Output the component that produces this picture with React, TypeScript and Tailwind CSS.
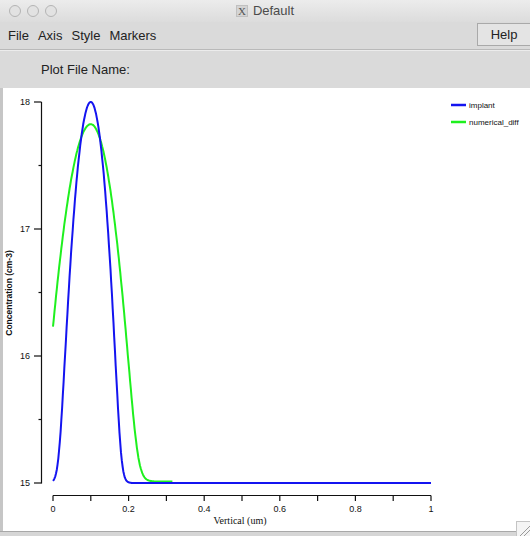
import React from 'react';

// page-space mapping for the plot
const px = (x: number) => 53 + 378 * x;
const py = (c: number) => 484 - 127 * (c - 15);

function profile(x: number, peak: number, kl: number, kr: number) {
  const dx = x - 0.1;
  const k = dx < 0 ? kl : kr;
  return Math.log10(Math.pow(10, peak - k * dx * dx) + 1e15);
}

function path(from: number, to: number, f: (x: number) => number, dy = 0) {
  const pts: string[] = [];
  for (let x = from; x <= to + 1e-9; x += 0.002) {
    pts.push(`${px(x).toFixed(1)},${(py(f(x)) + dy).toFixed(1)}`);
  }
  return 'M' + pts.join(' L');
}

const blue = path(0, 1, (x) => profile(x, 18, 440, 490));
const green = path(0, 0.317, (x) => profile(x, 17.813, 162, 194), -1.5);

function Plot() {
  const yTicks = [18, 17, 16, 15];
  const xTicks = Array.from({ length: 11 }, (_, i) => i / 10);
  return (
    <svg width="527" height="442" viewBox="3 89 527 442" className="block">
      {/* y axis */}
      <line x1="41.5" y1="103" x2="41.5" y2="484.5" stroke="#111" strokeWidth="1.2" />
      {yTicks.map((t) => (
        <g key={t}>
          <line x1="34" y1={py(t)} x2="41.5" y2={py(t)} stroke="#111" strokeWidth="1.2" />
          <text x="30" y={py(t) + 3} textAnchor="end" fontSize="9" fontFamily="Liberation Sans, Arial, sans-serif" fill="#111">
            {t}
          </text>
        </g>
      ))}
      {[17.5, 16.5, 15.5].map((t) => (
        <line key={t} x1="38.5" y1={py(t)} x2="41.5" y2={py(t)} stroke="#111" strokeWidth="1.2" />
      ))}
      <text
        transform="translate(12 294) rotate(-90)"
        textAnchor="middle"
        fontSize="8.5"
        fontWeight="bold"
        fontFamily="Liberation Sans, Arial, sans-serif"
        fill="#111"
      >
        Concentration (cm-3)
      </text>

      {/* x axis */}
      <line x1="53" y1="496.5" x2="431" y2="496.5" stroke="#111" strokeWidth="1.2" />
      {xTicks.map((t, i) => (
        <g key={i}>
          <line x1={px(t)} y1="496.5" x2={px(t)} y2="502" stroke="#111" strokeWidth="1.2" />
          {i % 2 === 0 && (
            <text x={px(t)} y="513" textAnchor="middle" fontSize="9" fontFamily="Liberation Sans, Arial, sans-serif" fill="#111">
              {i === 0 ? '0' : i === 10 ? '1' : t.toFixed(1)}
            </text>
          )}
        </g>
      ))}
      <text x="240" y="525" textAnchor="middle" fontSize="10" fontFamily="Liberation Serif, Times New Roman, serif" fill="#111">
        Vertical (um)
      </text>

      {/* curves */}
      <path d={green} fill="none" stroke="#1ef01e" strokeWidth="2" strokeLinejoin="round" />
      <path d={blue} fill="none" stroke="#1414f0" strokeWidth="2" strokeLinejoin="round" />

      {/* legend */}
      <line x1="451" y1="106" x2="466" y2="106" stroke="#1414f0" strokeWidth="2.5" />
      <text x="469" y="109" fontSize="8" fontFamily="Liberation Sans, Arial, sans-serif" fill="#111">
        implant
      </text>
      <line x1="451" y1="123" x2="466" y2="123" stroke="#1ef01e" strokeWidth="2.5" />
      <text x="469" y="126" fontSize="8" fontFamily="Liberation Sans, Arial, sans-serif" fill="#111">
        numerical_diff
      </text>
    </svg>
  );
}

function Light() {
  return <span className="w-[12px] h-[12px] rounded-full border border-[#b4b4b4] bg-[#e2e2e2]" />;
}

export default function App() {
  return (
    <div className="w-[530px] h-[536px] flex flex-col bg-[#dadada] overflow-hidden font-['Liberation_Sans',Arial,sans-serif] text-[13px] text-[#222]">
      {/* title bar */}
      <div className="h-[22px] shrink-0 grid grid-cols-[1fr_auto_1fr] items-center bg-gradient-to-b from-[#ececec] to-[#dcdcdc]">
        <div className="flex items-center gap-[6px] pl-[9px]">
          <Light />
          <Light />
          <Light />
        </div>
        <div className="flex items-center gap-[5px] text-[#4b4b4b]">
          <span className="w-[12px] h-[12px] flex items-center justify-center bg-[#d4d4d4] border border-[#c0c0c0] font-['Liberation_Serif',serif] text-[11px] leading-none text-[#555]">
            X
          </span>
          <span>Default</span>
        </div>
        <div />
      </div>

      {/* menu bar */}
      <div className="h-[28px] shrink-0 flex items-center border-b border-[#b9b9b9]">
        <div className="flex items-center gap-[9px] pl-[8px]">
          <span>File</span>
          <span>Axis</span>
          <span>Style</span>
          <span>Markers</span>
        </div>
        <div className="ml-auto self-start mt-[1px] h-[23px] w-[53px] flex items-center justify-center border border-[#a9a9a9] border-r-0 bg-[#e4e4e4]">
          Help
        </div>
      </div>

      {/* plot file name panel */}
      <div className="h-[38px] shrink-0 flex items-center pl-[41px] border-t border-[#ececec]">
        Plot File Name:
      </div>

      {/* plot */}
      <div className="relative flex-1 flex flex-col">
        <div className="flex-1 bg-white border-l-[3px] border-[#c6c6c6]">
          <Plot />
        </div>
        <div className="h-[5px] shrink-0 border-t border-[#a8a8a8] bg-[#d6d6d6]" />
        <svg className="absolute right-0 bottom-0" width="14" height="15" viewBox="0 0 14 15">
          <rect x="0.5" y="0.5" width="14" height="15" fill="#f4f4f4" stroke="#c4c4c4" />
          <line x1="4" y1="15" x2="14" y2="5" stroke="#9a9a9a" />
          <line x1="8" y1="15" x2="14" y2="9" stroke="#9a9a9a" />
        </svg>
      </div>
    </div>
  );
}
